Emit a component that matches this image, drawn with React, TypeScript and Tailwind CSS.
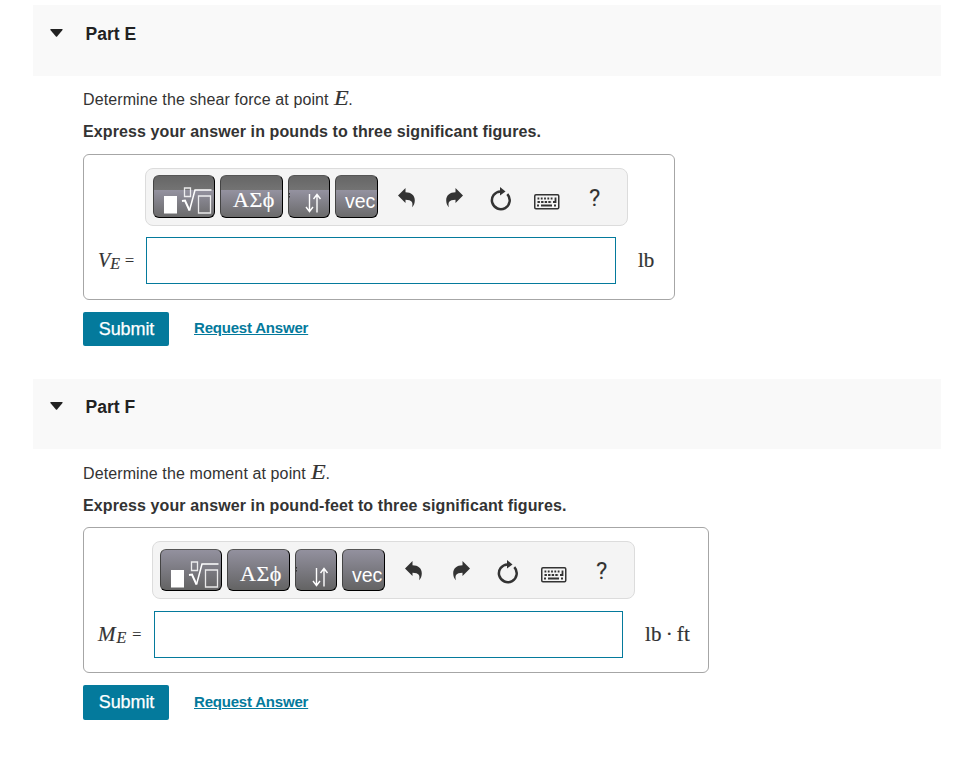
import clsx from 'clsx'
import type { ReactNode } from 'react'

type Part = {
  id: string
  title: string
  quantity: string
  instruction: string
  symbol: string
  unit: string
  glossy: boolean
}

const parts: Part[] = [
  {
    id: 'part-e',
    title: 'Part E',
    quantity: 'shear force',
    instruction: 'Express your answer in pounds to three significant figures.',
    symbol: 'V',
    unit: 'lb',
    glossy: true,
  },
  {
    id: 'part-f',
    title: 'Part F',
    quantity: 'moment',
    instruction: 'Express your answer in pound-feet to three significant figures.',
    symbol: 'M',
    unit: 'lb · ft',
    glossy: false,
  },
]

export default function App() {
  return (
    <main className="h-[758px] w-[971px] overflow-hidden bg-white pt-[5px] font-['Liberation_Sans',Arial,sans-serif] text-[#333]">
      {parts.map((part) => (
        <QuestionPart key={part.id} part={part} />
      ))}
    </main>
  )
}

function QuestionPart({ part }: { part: Part }) {
  const wide = !part.glossy

  return (
    <section className={clsx('ml-[33px] w-[908px]', part.glossy ? 'h-[374px]' : 'h-[373px]')}>
      <header className={clsx('flex items-start bg-[#f9f9f9] pl-[17px]', part.glossy ? 'h-[71px] pt-[17px]' : 'h-[70px] pt-[16px]')}>
        <svg className="mt-[7px] h-2 w-[13px] fill-[#222]" viewBox="0 0 13 8">
          <path d="M1 0h11q1 .1.5 1L7.1 7.5q-.6.7-1.2 0L.4 1Q0 .1 1 0Z" />
        </svg>
        <h2 className="ml-[22.5px] text-[17.5px] font-bold leading-[24px] text-[#222]">{part.title}</h2>
      </header>

      <div className="ml-[50px]">
        <p
          className={clsx(
            'flex h-[34px] items-baseline text-base leading-8 tracking-[0.11px]',
            part.glossy ? 'mt-[6px]' : 'mt-[7px]',
          )}
        >
          <span className="whitespace-pre">{`Determine the ${part.quantity} at point `}</span>
          <MathText className="w-[15px] text-[21px] italic">
            <span className="ml-px inline-block origin-left scale-x-115">E</span>
          </MathText>
          <span>.</span>
        </p>
        <p className="h-8 text-base font-bold leading-8 tracking-[0.11px]">{part.instruction}</p>

        <div
          className={clsx(
            'h-[146px] rounded-[6px] border border-[#a6a6a6] pl-[14px] pt-[13px]',
            wide ? 'mt-[5px] w-[626px]' : 'mt-[6px] w-[592px]',
          )}
        >
          <Toolbar glossy={part.glossy} />
          <div className={clsx('flex h-[47px] items-center', part.glossy ? 'mt-[11px]' : 'mt-[12px]')}>
            <label htmlFor={part.id} className={clsx('flex items-baseline leading-6', wide ? 'w-14' : 'w-12')}>
              <MathText className={clsx('italic', wide ? 'w-[18.5px] text-[21px]' : 'text-[20px]')}>{part.symbol}</MathText>
              <MathText className="relative top-[2px] text-[16px] italic">E</MathText>
              <MathText className={clsx('relative -top-px text-base', wide ? 'ml-[6px]' : 'ml-[5px]')}>=</MathText>
            </label>
            <input
              id={part.id}
              className={clsx('h-[47px] border border-[#047a9c] bg-white px-2 outline-none', wide ? 'w-[469px]' : 'w-[470px]')}
            />
            <MathText
              className={clsx('relative -top-px ml-[22px] text-[21px] leading-6', wide && '[word-spacing:-1.5px] tracking-[0.2px]')}
            >
              {part.unit}
            </MathText>
          </div>
        </div>

        <div className="mt-3 flex">
          <button
            type="button"
            className={clsx(
              'w-[86px] rounded-[2px] bg-[#047a9c] pl-px text-[18px] tracking-[-0.1px] text-white [-webkit-text-stroke:0.25px_white]',
              wide ? 'h-[35px]' : 'h-[34px]',
            )}
          >
            Submit
          </button>
          <a
            href="#"
            className={clsx(
              'ml-[25px] text-[15px] font-bold leading-[22px] tracking-[-0.2px] text-[#047a9c] underline',
              wide ? 'mt-[6px]' : 'mt-[5px]',
            )}
          >
            Request Answer
          </a>
        </div>
      </div>
    </section>
  )
}

function Toolbar({ glossy }: { glossy: boolean }) {
  return (
    <div
      className={clsx(
        'flex h-[58px] w-[483px] items-start rounded-[8px] border border-[#dcdcdc] bg-[#f4f4f4] pl-[7px] text-[#333]',
        glossy ? 'ml-[47px] pt-[6px]' : 'ml-[54px] pt-[7px]',
      )}
    >
      <PaletteButton glossy={glossy} className="w-[62px]">
        <svg className="h-[41px] w-[60px]" viewBox="0 0 60 41" fill="none" stroke="white">
          <path d="M10 20h13v17.5H10z" fill="white" stroke="none" />
          <path d="M30.500 12h6v8.500h-6zM44.500 20h12v17h-12z" strokeWidth="1.3" opacity=".85" />
          <path d="M28 25l3-.5 4.500 10" strokeWidth="2" />
          <path d="M35.500 34.500 41 14h16.500" strokeWidth="1.5" />
        </svg>
      </PaletteButton>
      <PaletteButton glossy={glossy} className="ml-[5px] w-[63px]">
        <span className="block pl-[12px] pt-[9px] font-['Liberation_Serif',serif] text-[22px] leading-[30px] tracking-[0.5px] [-webkit-text-stroke:0.2px_white]">
          ΑΣϕ
        </span>
      </PaletteButton>
      <PaletteButton glossy={glossy} className="ml-[5px] w-[42px]">
        <svg className="h-[41px] w-[40px]" viewBox="0 0 40 41" fill="none" stroke="white" strokeWidth="1.4">
          <path d="M20.500 18v17.500M17 31l3.500 4.500 3.500-4.500M28 36.500V19M24.500 23l3.500-4.500 3.500 4.500" />
          <path d="M0 17h1v1.500H0zM0 20h1v1.500H0z" fill="#333" stroke="none" />
        </svg>
      </PaletteButton>
      <PaletteButton glossy={glossy} className="ml-[5px] w-[43px]">
        <span className="block pl-[9px] pt-[13px] text-[19.5px] leading-[24px]">vec</span>
      </PaletteButton>

      <div className={clsx('flex', glossy && 'mt-px')}>
        <svg className="ml-[20px] mt-[12px] h-5 w-[17px] fill-[#333]" viewBox="0 0 17 20">
          <path d="M0 7.500 7.500 0v4.200c5.700 0 9.300 3 9.300 8 0 3-.9 5-2.700 7 1.100-4.500.1-7.400-6.600-7.400V15Z" />
        </svg>
        <svg className="ml-[31px] mt-[12px] h-5 w-[17px] fill-[#333]" viewBox="0 0 17 20">
          <path d="M17 7.500 9.500 0v4.200c-5.700 0-9.300 3-9.300 8 0 3 .9 5 2.700 7-1.100-4.500-.1-7.400 6.600-7.400V15Z" />
        </svg>
        <svg className="ml-[27px] mt-[11px] h-[24px] w-[21px]" viewBox="0 0 21 24">
          <path d="M10.500 4.400A8.900 8.900 0 1 0 17.300 7.200" fill="none" stroke="#333" strokeWidth="2.500" />
          <path d="M10 0 15.500 4.500 10 8.500Z" fill="#333" />
        </svg>
        <Keyboard />
        <span className="ml-[29px] mt-[8px] font-['Roboto',sans-serif] text-[24px] leading-[28px]">?</span>
      </div>
    </div>
  )
}

function Keyboard() {
  return (
    <svg className="ml-[23px] mt-[18px] h-4 w-[26px]" viewBox="0 0 26 16" fill="none" stroke="#333">
      <rect x=".75" y=".75" width="24" height="14" rx="1.2" strokeWidth="1.5" />
      <path d="M3.500 4.500h16.500" strokeWidth="1.800" strokeDasharray="1.800 1.500" />
      <path d="M3.500 8H18" strokeWidth="1.800" strokeDasharray="2.400 1.200" />
      <path d="M3 11.500h2M7 11.500h11M20 11.500h2" strokeWidth="1.800" />
      <path d="M21.500 3.500V8H19" strokeWidth="1.800" />
    </svg>
  )
}

function PaletteButton({ children, className, glossy }: { children: ReactNode; className: string; glossy: boolean }) {
  return (
    <button
      type="button"
      className={clsx(
        'flex shrink-0 items-start overflow-hidden rounded-[6px] border border-t-[#555] border-r-black border-b-black border-l-[#444] bg-origin-border text-left text-white',
        glossy
          ? 'h-[43px] bg-[linear-gradient(#656565_0,#737373_15px,#9492a0_15px,#696969_100%)]'
          : 'h-[42px] bg-[linear-gradient(#9492a0,#626262)]',
        className,
      )}
    >
      {children}
    </button>
  )
}

function MathText({ children, className }: { children: ReactNode; className?: string }) {
  return (
    <span className={clsx("font-['Liberation_Serif',serif] [-webkit-text-stroke:0.2px_#333]", className)}>{children}</span>
  )
}
